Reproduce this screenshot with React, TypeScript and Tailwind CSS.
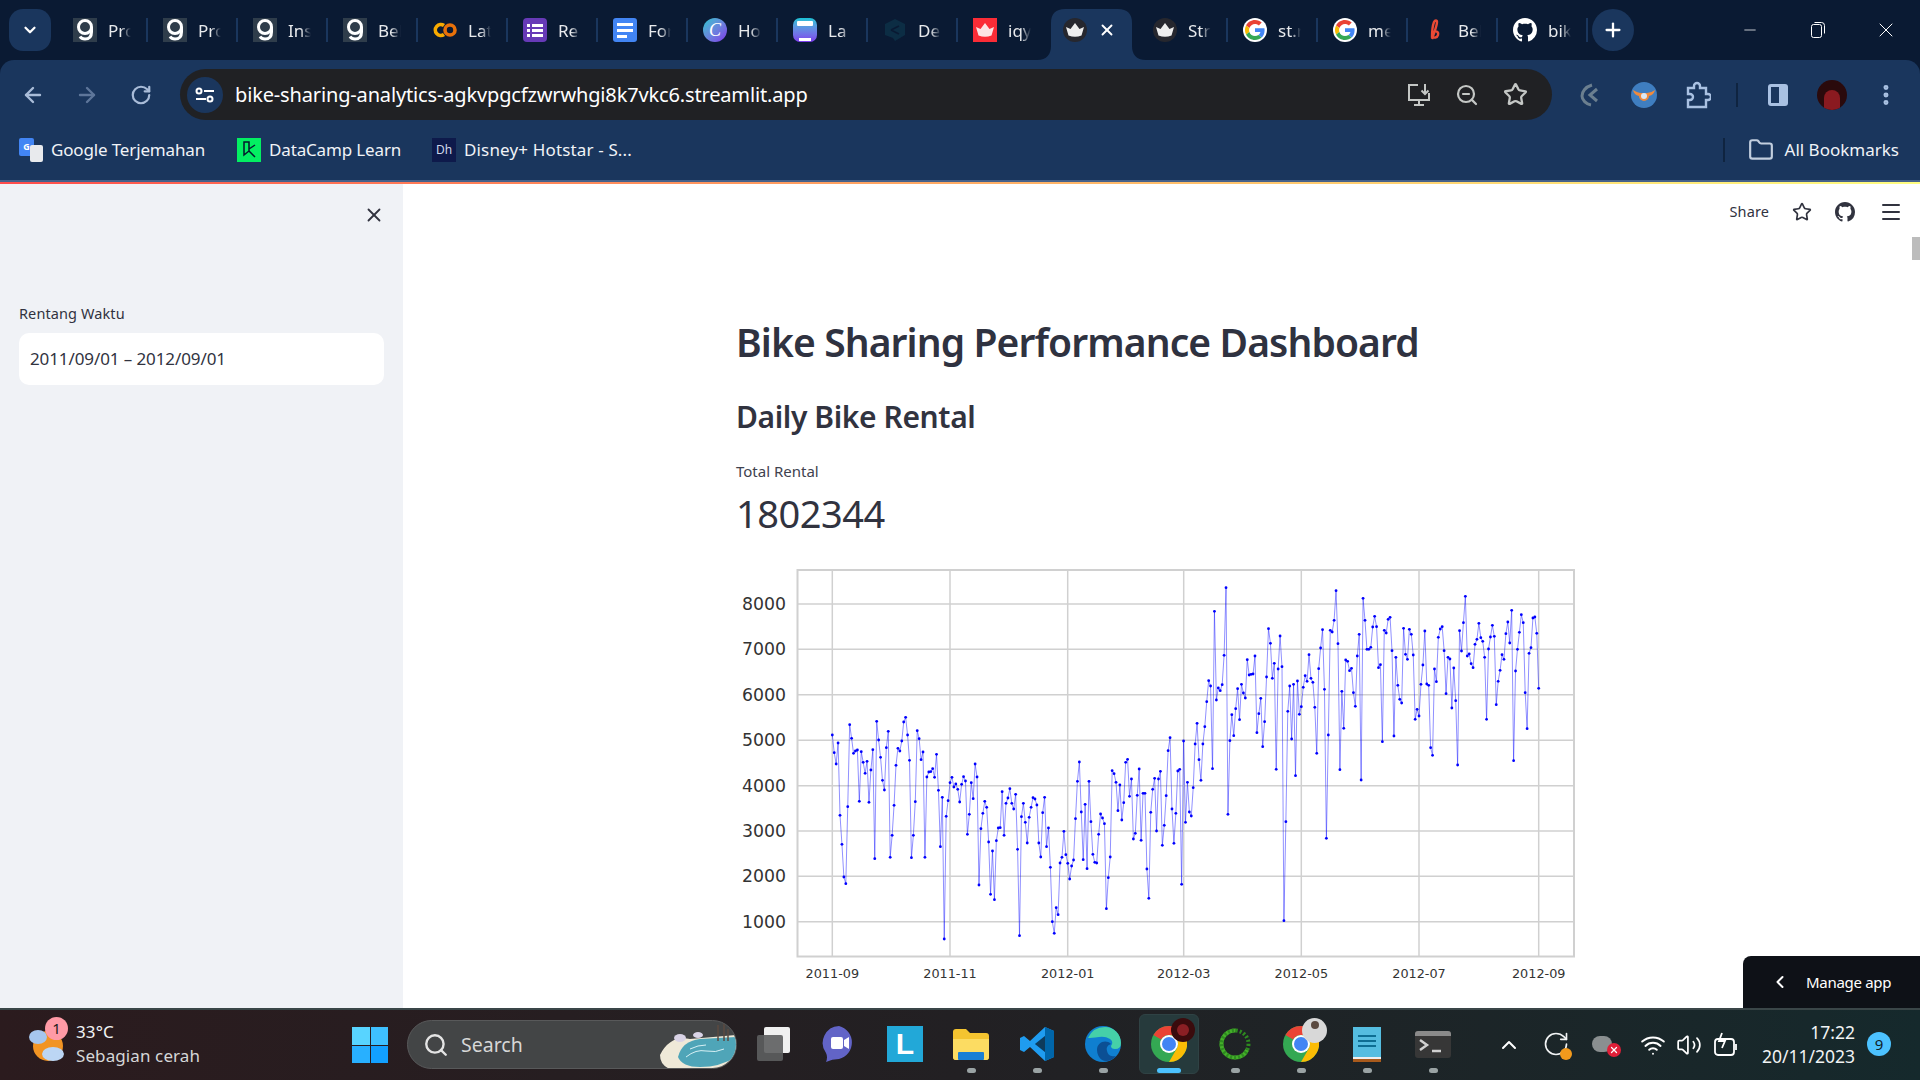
import { ArrowLeft, ArrowRight, ChevronDown, ChevronLeft, ChevronUp, Folder, Menu, Minus, MoreVertical, Plus, RotateCw, Search, Star, Volume2, Wifi, X, ZoomOut } from "lucide-react";
import type { ReactNode } from "react";

// y values read off the chart, one per day from 2011-09-01 to 2012-09-01
const rawY = [
  525,578,612,549,766,853,951,971,740,494,535,580,573,570,724,575,607,640,604,727,630,569,896,484,540,592,661,690,563,514,892,826,736,616,565,573,543,486,472,525,601,893,826,725,512,536,599,576,892,651,636,635,626,652,583,691,860,712,1137,769,722,668,652,681,672,688,726,673,650,663,823,763,668,716,612,651,975,806,760,724,742,846,1003,873,1019,842,804,803,695,826,730,714,686,730,747,703,868,1127,770,730,787,849,772,742,713,717,735,849,891,758,712,860,804,922,1085,1120,1043,1064,909,892,814,884,910,957,918,900,776,664,606,756,899,733,926,664,785,883,907,909,823,762,774,791,1046,953,891,632,641,667,752,675,780,728,607,598,709,657,837,820,706,627,841,700,700,927,1015,757,688,655,813,657,634,856,796,707,572,533,747,850,760,633,628,973,543,787,667,756,768,683,552,490,599,
  661,552,500,425,362,378,626,154,420,384,392,374,286,83,763,542,464,527,446,386,479,373,399,414,299,345,343,342,288,518,461,415,560,485,351,206,250,355,310,628,327,228,320,1082,785,454,378,537,373,647,363,463,440,382,347,364,284,355,367,442,580,326,264,209,388,835,525,211,216,181,92,251,629,394,505,300,304,332,325,398,439,288,223,660,115,181,268,268,262,201,169,200,323,314,545,211,219,178,172,272,528,292,376,418,429,205,283,298,208,223,285,478,448,468,373,315,213,372,376,563,586,327,365,232,207,200,272,401,292,297,444,324,422,615,212,273,188,109,288,282,311,323,253,238,190,233,244,292,478,267,231,196,229,434,364,331,284,298,221,186,249,151,602,333,268,217,164,188,398,506,280,263,174,171,220,385,
];

const points = rawY.map((v, i) => ({
  x: 832.3 + (i * 706.4) / (rawY.length - 1),
  y: 560 + v / 3,
}));

const yTicks = [
  { label: "8000", y: 604 },
  { label: "7000", y: 649.3 },
  { label: "6000", y: 694.7 },
  { label: "5000", y: 740.3 },
  { label: "4000", y: 785.7 },
  { label: "3000", y: 831 },
  { label: "2000", y: 876.3 },
  { label: "1000", y: 921.7 },
];

const xTicks = [
  { label: "2011-09", x: 832.3 },
  { label: "2011-11", x: 950 },
  { label: "2012-01", x: 1067.7 },
  { label: "2012-03", x: 1183.7 },
  { label: "2012-05", x: 1301.3 },
  { label: "2012-07", x: 1419 },
  { label: "2012-09", x: 1538.7 },
];

const Nine = () => (
  <div className="w-6 h-6 bg-[#2f3d4b] flex items-center justify-center">
    <svg width="20" height="24" viewBox="0 0 20 24" fill="none" stroke="#fff" strokeWidth="3">
      <circle cx="10" cy="9" r="6.5" />
      <path d="M16.5 9v5c0 5-3 7-6.5 7-2 0-4-.8-5-2.5" />
    </svg>
  </div>
);

const Colab = () => (
  <svg width="24" height="24" viewBox="0 0 24 24" fill="none" strokeWidth="3.6">
    <path d="M11 7.5a5.5 5.5 0 1 0 0 9" stroke="#f9ab00" />
    <circle cx="17" cy="12" r="5" stroke="#e8710a" />
  </svg>
);

const Forms = () => (
  <div className="w-6 h-6 bg-[#673ab7] rounded-sm flex flex-col justify-center gap-[2px] px-1">
    {[0, 1, 2].map((i) => (
      <div key={i} className="flex gap-[2px]">
        <div className="w-[3px] h-[3px] bg-white" />
        <div className="flex-1 h-[3px] bg-white" />
      </div>
    ))}
  </div>
);

const Docs = () => (
  <div className="w-6 h-6 bg-[#4285f4] rounded-[3px] flex flex-col justify-center gap-[3px] px-1">
    <div className="h-[3px] bg-white" />
    <div className="h-[3px] bg-white" />
    <div className="h-[3px] w-[10px] bg-white" />
  </div>
);

const Canva = () => (
  <div className="w-6 h-6 rounded-full bg-gradient-to-br from-[#00c4cc] to-[#7d2ae8] flex items-center justify-center text-white italic text-[18px] leading-none font-['Liberation_Serif',serif]">
    C
  </div>
);

const Layer = () => (
  <div className="w-6 h-6 rounded-[7px] bg-gradient-to-b from-[#12c2d6] to-[#7c3aed] flex flex-col items-center justify-between py-[1px]">
    <div className="w-4 h-[5px] bg-white rounded-[1px] mt-[2px]" />
    <div className="w-3 h-[3px] bg-white" />
  </div>
);

const DeepLearning = () => (
  <svg width="24" height="24" viewBox="0 0 24 24">
    <path d="M12 1l10 5v11l-10 6-2-3-8-3V6z" fill="#0c2d44" />
    <path d="M8 12l8-4M8 12l8 4" stroke="#0a1a33" strokeWidth="1.6" />
  </svg>
);

const Crown = ({ color = "#fff" }: { color?: string }) => (
  <svg width="18" height="14" viewBox="0 0 18 14">
    <path d="M0 4l4.5 2L9 0l4.5 6L18 4l-2.5 8.5Q9 15 2.5 12.5z" fill={color} />
  </svg>
);

const Streamlit = () => (
  <div className="w-6 h-6 rounded-full bg-[#26272e] flex items-center justify-center">
    <Crown color="#eee" />
  </div>
);

const Red = () => (
  <div className="w-6 h-6 bg-[#fb2c36] flex items-center justify-center">
    <Crown color="#fde4e4" />
  </div>
);

const GoogleG = () => (
  <div className="w-6 h-6 rounded-full bg-white flex items-center justify-center">
    <svg width="20" height="20" viewBox="0 0 48 48">
      <path fill="#EA4335" d="M24 9.5c3.5 0 6.7 1.2 9.200 3.600l6.900-6.900C35.900 2.400 30.500 0 24 0 14.600 0 6.500 5.400 2.600 13.200l8 6.200C12.500 13.700 17.800 9.500 24 9.500z" />
      <path fill="#4285F4" d="M46.980 24.550c0-1.570-.15-3.090-.38-4.550H24v9.020h12.940c-.58 2.960-2.260 5.480-4.780 7.180l7.730 6c4.510-4.180 7.090-10.360 7.090-17.650z" />
      <path fill="#FBBC05" d="M10.530 28.590a14.500 14.500 0 0 1 0-9.180l-7.980-6.190a24 24 0 0 0 0 21.560z" />
      <path fill="#34A853" d="M24 48c6.480 0 11.930-2.130 15.890-5.810l-7.730-6c-2.150 1.450-4.920 2.300-8.160 2.300-6.260 0-11.570-4.220-13.470-9.910l-7.980 6.190C6.510 42.620 14.620 48 24 48z" />
    </svg>
  </div>
);

const Behance = () => (
  <svg width="24" height="24" viewBox="0 0 24 24" fill="none" stroke="#ea4a35" strokeWidth="2.4">
    <path d="M9 21c2-6 5-13 5-17 0-2-2-2-3 0-1.500 4-2 10-2 15 2 1 5 1 6-2 .8-3-2-4.500-4-3" />
  </svg>
);

const GithubMark = ({ size = 24, color = "#fff" }: { size?: number; color?: string }) => (
  <svg width={size} height={size} viewBox="0 0 16 16" fill={color}>
    <path d="M8 0C3.580 0 0 3.580 0 8c0 3.540 2.290 6.530 5.470 7.590.4.070.55-.17.55-.38 0-.19-.01-.82-.01-1.490-2.010.37-2.530-.49-2.690-.94-.09-.23-.48-.94-.82-1.130-.28-.15-.68-.52-.01-.53.63-.01 1.080.58 1.230.82.720 1.210 1.870.870 2.330.660.070-.520.280-.870.510-1.070-1.780-.2-3.640-.89-3.640-3.950 0-.870.310-1.590.820-2.150-.080-.2-.360-1.020.080-2.120 0 0 .670-.210 2.200.820.640-.180 1.320-.270 2-.270s1.360.090 2 .270c1.530-1.040 2.200-.820 2.200-.820.440 1.100.160 1.920.080 2.120.510.560.820 1.270.820 2.150 0 3.070-1.870 3.750-3.650 3.950.290.250.540.730.540 1.480 0 1.070-.010 1.930-.010 2.200 0 .210.150.460.550.380A8.010 8.010 0 0 0 16 8c0-4.420-3.580-8-8-8z" />
  </svg>
);

const tabs: { icon: ReactNode; label: string }[] = [
  { icon: <Nine />, label: "Pro" },
  { icon: <Nine />, label: "Pro" },
  { icon: <Nine />, label: "Ins" },
  { icon: <Nine />, label: "Bel" },
  { icon: <Colab />, label: "Lat" },
  { icon: <Forms />, label: "Re" },
  { icon: <Docs />, label: "For" },
  { icon: <Canva />, label: "Ho" },
  { icon: <Layer />, label: "La" },
  { icon: <DeepLearning />, label: "De" },
  { icon: <Red />, label: "iqy" },
];

const tabsAfter: { icon: ReactNode; label: string }[] = [
  { icon: <Streamlit />, label: "Str" },
  { icon: <GoogleG />, label: "st.r" },
  { icon: <GoogleG />, label: "me" },
  { icon: <Behance />, label: "Bel" },
  { icon: <GithubMark />, label: "bik" },
];

const Tab = ({ icon, label, divider }: { icon: ReactNode; label: string; divider: boolean }) => (
  <div className="w-[90px] h-6 flex items-center pl-[17px] relative">
    {icon}
    <div className="ml-[11px] mt-[2px] w-[23px] overflow-hidden whitespace-nowrap text-[17px] text-[#e8eaed] [mask-image:linear-gradient(to_right,black_55%,transparent)]">
      {label}
    </div>
    {divider && <div className="absolute right-[-2px] top-0 w-[2px] h-6 bg-[#1a365d]" />}
  </div>
);

const ChromeIcon = () => (
  <svg width="36" height="36" viewBox="0 0 36 36">
    <circle cx="18" cy="18" r="18" fill="#34a853" />
    <path d="M18 0A18 18 0 0 1 33.600 9H18a9 9 0 0 0-7.800 4.500L2.400 9A18 18 0 0 1 18 0z" fill="#ea4335" />
    <path d="M33.600 9A18 18 0 0 1 18 36l7.800-13.500A9 9 0 0 0 18 9z" fill="#fbbc05" />
    <circle cx="18" cy="18" r="9" fill="#fff" />
    <circle cx="18" cy="18" r="7" fill="#4285f4" />
  </svg>
);

const TaskSlot = ({ children, dot, active }: { children?: ReactNode; dot?: boolean; active?: boolean }) => (
  <div className="w-[66px] h-[60px] mt-[4px] flex flex-col items-center relative">
    {active && <div className="absolute inset-x-[3px] top-0 h-[60px] rounded-md bg-[#263a3c] border border-[#2f4244]" />}
    <div className="h-[60px] flex items-center justify-center relative">{children}</div>
    {dot && <div className="absolute top-[54px] w-[9px] h-[5px] rounded-full bg-[#9aa3a4]" />}
    {active && <div className="absolute top-[54px] w-6 h-[5px] rounded-full bg-[#4cc2ff]" />}
  </div>
);

export default function App() {
  return (
    <div className="w-[1920px] h-[1080px] overflow-hidden flex flex-col font-['Noto_Sans',sans-serif]">
      {/* tab strip */}
      <div className="h-[60px] bg-[#0a1a33] flex items-center pl-[9px] relative shrink-0">
        <div className="w-[42px] h-[42px] rounded-[14px] bg-[#1a365d] flex items-center justify-center">
          <ChevronDown size={18} color="#fff" strokeWidth={3} />
        </div>
        <div className="ml-[5px] flex items-center">
          {tabs.map((t, i) => (
            <Tab key={i} icon={t.icon} label={t.label} divider={i < tabs.length - 1} />
          ))}
          <div className="w-[90px] h-[51px] mt-[9px] flex items-start pt-[9px] pl-[17px] relative">
            <svg className="absolute left-[-9px] top-0" width="109" height="51" viewBox="0 0 109 51">
              <path d="M0 51C10 51 14 45 14 37V14Q14 0 28 0H81Q95 0 95 14V37C95 45 99 51 109 51z" fill="#1a365d" />
            </svg>
            <div className="relative">
              <Streamlit />
            </div>
            <X className="relative ml-[11px] mt-[3px]" size={18} color="#fff" strokeWidth={2.5} />
          </div>
          {tabsAfter.map((t, i) => (
            <Tab key={i} icon={t.icon} label={t.label} divider />
          ))}
          <div className="ml-[6px] w-[42px] h-[42px] rounded-full bg-[#1a365d] flex items-center justify-center">
            <Plus size={22} color="#fff" strokeWidth={2.5} />
          </div>
        </div>
        <div className="ml-auto flex items-center text-white">
          <div className="w-[68px] flex justify-center"><Minus size={18} strokeWidth={1} /></div>
          <div className="w-[68px] flex justify-center">
            <svg width="16" height="18" viewBox="0 0 16 18" fill="none" stroke="#fff" strokeWidth="1">
              <rect x="1.500" y="3.500" width="10" height="13" rx="2" />
              <path d="M4.500 1.500h7a3 3 0 0 1 3 3v8" />
            </svg>
          </div>
          <div className="w-[68px] flex justify-center"><X size={24} strokeWidth={1} /></div>
        </div>
      </div>

      {/* toolbar + bookmarks */}
      <div className="bg-[#0a1a33] shrink-0">
        <div className="bg-[#1a365d] rounded-tl-[14px] rounded-tr-[14px]">
          <div className="h-[60px] pt-[9px]">
            <div className="h-[51px] flex items-center pl-[6px]">
              <div className="w-[54px] flex justify-center"><ArrowLeft size={24} color="#a9bcd8" strokeWidth={2.4} /></div>
              <div className="w-[54px] flex justify-center"><ArrowRight size={24} color="#5e769a" strokeWidth={2.4} /></div>
              <div className="w-[54px] flex justify-center"><RotateCw size={22} color="#a9bcd8" strokeWidth={2.4} /></div>
              <div className="ml-[12px] w-[1372px] h-[51px] rounded-full bg-[#202124] flex items-center">
                <div className="ml-[7px] w-9 h-9 rounded-full bg-[#1a365d] flex items-center justify-center">
                  <svg width="20" height="16" viewBox="0 0 20 16" fill="none" stroke="#fff" strokeWidth="2">
                    <circle cx="4" cy="4" r="2.500" />
                    <path d="M9 4h10M1 12h10" />
                    <circle cx="15" cy="12" r="2.500" />
                  </svg>
                </div>
                <div className="ml-[12px] flex-1 text-[20px] text-white whitespace-nowrap tracking-[-0.15px]">
                  bike-sharing-analytics-agkvpgcfzwrwhgi8k7vkc6.streamlit.app
                </div>
                <div className="w-12 flex justify-center">
                  <svg width="26" height="26" viewBox="0 0 26 26" fill="none" stroke="#c4c7c5" strokeWidth="2">
                    <path d="M12 3H3v15h20v-7M8 23h10M13 18v5" />
                    <path d="M19 2v10M15.500 8.500L19 12l3.500-3.500" />
                  </svg>
                </div>
                <div className="w-12 flex justify-center"><ZoomOut size={24} color="#c4c7c5" strokeWidth={2.2} /></div>
                <div className="w-12 flex justify-center"><Star size={25} color="#c4c7c5" strokeWidth={2.2} /></div>
                <div className="w-[13px]" />
              </div>
              <div className="ml-[11px] w-[54px] flex justify-center">
                <svg width="24" height="26" viewBox="0 0 24 26" fill="none" stroke="#6b7f8f" strokeWidth="3">
                  <path d="M14 3C7 5 4 10 4 14c0 4 4 8 9 9M19 7l-7 6 7 6" />
                </svg>
              </div>
              <div className="w-[54px] flex justify-center">
                <svg width="26" height="26" viewBox="0 0 26 26">
                  <circle cx="13" cy="13" r="13" fill="#3f7ec0" />
                  <path d="M2 8q5 3 8 3h6q4 0 8-3-1 5-6 6v0a5 5 0 1 1-10 0Q3 13 2 8z" fill="#f08a3c" />
                  <circle cx="13" cy="14" r="3" fill="#dce8f4" />
                </svg>
              </div>
              <div className="w-[54px] flex justify-center">
                <svg width="26" height="28" viewBox="0 0 26 28" fill="none" stroke="#a9c1e2" strokeWidth="2.400">
                  <path d="M3 7h6V5a3 3 0 0 1 6 0v2h6v6h2a2 2 0 0 1 0 6h-2v7H3v-7h2a3 3 0 0 0 0-6H3z" />
                </svg>
              </div>
              <div className="ml-[11px] w-[2px] h-6 bg-[#0f2440]" />
              <div className="ml-[13px] w-[54px] flex justify-center">
                <svg width="22" height="24" viewBox="0 0 22 24">
                  <rect x="1" y="1" width="20" height="22" rx="3" fill="#a9c1e2" />
                  <rect x="4" y="4" width="8" height="16" fill="#1a365d" />
                </svg>
              </div>
              <div className="w-[54px] flex justify-center">
                <div className="w-[30px] h-[30px] rounded-full bg-[#2a0a0c] overflow-hidden flex items-end justify-center">
                  <div className="w-4 h-5 bg-[#8a1a20] rounded-t-lg" />
                </div>
              </div>
              <div className="w-[54px] flex justify-center"><MoreVertical size={26} color="#a9c1e2" strokeWidth={2.6} /></div>
            </div>
          </div>
          <div className="h-[60px] flex items-center text-[17px] text-[#f0f3f7] whitespace-nowrap">
            <div className="ml-[19px] w-6 h-6 relative">
              <div className="absolute left-0 top-0 w-[15px] h-[18px] bg-[#4285f4] rounded-[2px] flex items-center justify-center text-[9px] font-bold text-white">G</div>
              <div className="absolute right-0 bottom-0 w-[13px] h-[17px] bg-[#e8eaed] rounded-[2px]" />
            </div>
            <span className="ml-[8px] mt-[-1px] w-[155px] tracking-[-0.15px]">Google Terjemahan</span>
            <div className="ml-[31px] w-6 h-6 bg-[#03ef62] flex items-center justify-center">
              <svg width="14" height="18" viewBox="0 0 14 18" fill="none" stroke="#05192d" strokeWidth="1.500">
                <path d="M2 1v13l5-4V1zM7 8l6-4M7 10l6 6" />
              </svg>
            </div>
            <span className="ml-[8px] mt-[-1px] w-[136px] tracking-[-0.15px]">DataCamp Learn</span>
            <div className="ml-[27px] w-6 h-6 bg-[#0e1a4b] flex items-center justify-center text-[12px] text-[#cfd8ea]">Dh</div>
            <span className="ml-[8px] mt-[-1px] tracking-[0.15px]">Disney+ Hotstar - S...</span>
            <div className="ml-auto w-[2px] h-6 bg-[#0f2440]" />
            <Folder className="ml-[23px]" size={26} color="#c2cede" strokeWidth={2} />
            <span className="ml-[11px] mr-[21px] mt-[-1px]">All Bookmarks</span>
          </div>
        </div>
      </div>

      {/* streamlit decoration */}
      <div className="h-[4px] shrink-0 bg-[#1a365d] flex flex-col">
        <div className="h-[2px] bg-[#45618a]" />
        <div className="h-[2px] bg-gradient-to-r from-[#ff4b4b] to-[#fffd80]" />
      </div>

      {/* page */}
      <div className="h-[824px] flex relative shrink-0 overflow-hidden bg-white text-[#31333f] font-['Noto_Sans',sans-serif]">
        <div className="w-[403px] bg-[#f0f2f6] shrink-0 flex flex-col">
          <div className="flex justify-end pt-[20px] pr-[18px]">
            <X size={22} color="#31333f" strokeWidth={2} />
          </div>
          <div className="mt-[77px] ml-[19px] text-[14.500px] leading-[20px] tracking-[0.1px]">Rentang Waktu</div>
          <div className="mt-[10px] ml-[19px] w-[365px] h-[52px] bg-white rounded-[10px] flex items-center pl-[11px] text-[17px] tracking-[-0.1px]">
            2011/09/01 – 2012/09/01
          </div>
        </div>

        <div className="flex-1 flex flex-col relative">
          <div className="h-[46px] flex items-center justify-end pr-[17px] mt-[5px] shrink-0">
            <span className="text-[14.500px] text-[#31333f] tracking-[0.1px]">Share</span>
            <Star className="ml-[23px]" size={20} color="#31333f" strokeWidth={2} />
            <div className="ml-[23px]"><GithubMark size={20} color="#31333f" /></div>
            <Menu className="ml-[24px]" size={24} color="#31333f" strokeWidth={2} />
          </div>
          <div className="pl-[333px] flex flex-col">
            <h1 className="mt-[81px] text-[39px] leading-[52px] font-semibold text-[#2f3240] tracking-[-0.9px] whitespace-nowrap">
              Bike Sharing Performance Dashboard
            </h1>
            <h2 className="mt-[29px] text-[30px] leading-[40px] font-semibold text-[#31333f] tracking-[-0.4px] whitespace-nowrap">
              Daily Bike Rental
            </h2>
            <div className="mt-[24px] text-[15px] leading-[20px] text-[#40424f]">Total Rental</div>
            <div className="mt-[6px] text-[38px] leading-[52px] text-[#31333f] tracking-[-0.5px]">1802344</div>
            <svg className="mt-[26px] block" width="860" height="420" viewBox="736 565 860 420">
              <g stroke="#d0d0d0" strokeWidth="1.500">
                {yTicks.map((t) => (
                  <line key={t.label} x1="797" x2="1574" y1={t.y} y2={t.y} />
                ))}
                {xTicks.map((t) => (
                  <line key={t.label} x1={t.x} x2={t.x} y1="570" y2="957" />
                ))}
              </g>
              <rect x="797.500" y="570" width="776.500" height="386.500" fill="none" stroke="#d0d0d0" strokeWidth="2" />
              <polyline
                points={points.map((p) => `${p.x},${p.y}`).join(" ")}
                fill="none"
                stroke="#0000ff"
                strokeOpacity="0.55"
                strokeWidth="0.8"
              />
              {points.map((p, i) => (
                <circle key={i} cx={p.x} cy={p.y} r="1.400" fill="#0000ff" />
              ))}
              <g fontFamily="'DejaVu Sans',sans-serif" fill="#333333">
                {yTicks.map((t) => (
                  <text key={t.label} x="786" y={t.y + 6} fontSize="17.300" textAnchor="end">
                    {t.label}
                  </text>
                ))}
                {xTicks.map((t) => (
                  <text key={t.label} x={t.x} y="978" fontSize="12.800" textAnchor="middle">
                    {t.label}
                  </text>
                ))}
              </g>
            </svg>
          </div>
          <div className="absolute right-0 top-[53px] w-2 h-[23px] bg-[#bcbcbc]" />
        </div>

        <div className="absolute right-0 bottom-0 w-[177px] h-[52px] bg-[#0e1117] rounded-tl-[8px] flex items-center pl-[27px] text-white text-[15px] tracking-[-0.3px]">
          <ChevronLeft size={20} strokeWidth={2.4} />
          <span className="ml-[16px]">Manage app</span>
        </div>
      </div>

      {/* taskbar */}
      <div className="h-[72px] shrink-0 border-t-[2px] border-[#3a4648] bg-gradient-to-r from-[#2b1b1e] via-[#222023] to-[#15292c] flex items-start text-[#f1f3f4] whitespace-nowrap">
        <div className="ml-[28px] w-[40px] h-[70px] relative">
          <svg className="absolute left-0 top-[12px]" width="38" height="44" viewBox="0 0 38 44">
            <circle cx="20" cy="24" r="15" fill="#f29423" />
            <ellipse cx="10" cy="15" rx="9" ry="7" fill="#a6c6ee" />
            <ellipse cx="25" cy="32" rx="11" ry="7" fill="#bcd6f4" />
          </svg>
          <div className="absolute left-[17px] top-[7px] w-[23px] h-[23px] rounded-full bg-[#ff9aa6] text-[#1c1c1c] text-[15px] leading-[23px] text-center">1</div>
        </div>
        <div className="ml-[8px] mt-[10px] w-[140px] flex flex-col text-[17px] leading-[24px] tracking-[0.1px]">
          <span>33°C</span>
          <span className="text-[#d5d6d7]">Sebagian cerah</span>
        </div>
        <div className="ml-[136px] mt-[17px] w-[36px] h-[36px] grid grid-cols-2 gap-[1px]">
          <div className="bg-[#58d4ff]" />
          <div className="bg-[#3ec0ff]" />
          <div className="bg-[#28b0ff]" />
          <div className="bg-[#12a0ff]" />
        </div>
        <div className="ml-[19px] mt-[10px] w-[330px] h-[49px] rounded-full bg-[#434546] border border-[#58595a] flex items-center pl-[15px] relative overflow-hidden">
          <Search size={26} color="#e4e4e4" strokeWidth={2.2} />
          <span className="ml-[12px] text-[19.500px] text-[#d6d7d7]">Search</span>
          <svg className="absolute right-0 top-0" width="78" height="48" viewBox="0 0 78 48">
            <path d="M2 34Q12 14 32 18L78 14V48H12Q2 44 2 34z" fill="#efe9d8" />
            <path d="M20 36Q24 20 42 18L78 16V36Q62 46 42 46 24 46 20 36z" fill="#4fa5b8" />
            <path d="M28 36q10-8 20-6t18-2M32 28q8-4 16-4" stroke="#d7f0f4" fill="none" />
            <path d="M60 20V4M66 20V2M70 20V8" stroke="#5b4a40" strokeWidth="1.500" />
            <ellipse cx="22" cy="17" rx="6" ry="4" fill="#d9d3e6" />
            <ellipse cx="40" cy="14" rx="5" ry="3" fill="#d9d3e6" />
          </svg>
        </div>
        <div className="ml-[3px] flex">
          <TaskSlot>
            <svg width="36" height="36" viewBox="0 0 36 36">
              <rect x="9" y="1" width="26" height="26" rx="2" fill="#f0f0f0" />
              <rect x="2" y="9" width="26" height="26" rx="2" fill="#5d5e5f" fillOpacity="0.9" />
            </svg>
          </TaskSlot>
          <TaskSlot>
            <svg width="34" height="38" viewBox="0 0 34 38">
              <path d="M17 1a17 17 0 0 1 0 33q-7 0-13 3 2-5 0-9A17 17 0 0 1 17 1z" fill="#6264c7" />
              <rect x="9" y="12" width="12" height="12" rx="2" fill="#fff" />
              <path d="M22 15l5-3v12l-5-3z" fill="#fff" />
            </svg>
          </TaskSlot>
          <TaskSlot>
            <div className="w-9 h-9 bg-[#22a8d8] flex items-center justify-center font-bold text-white text-[30px] leading-none font-['Liberation_Sans',sans-serif]">L</div>
          </TaskSlot>
          <TaskSlot dot>
            <svg width="38" height="34" viewBox="0 0 38 34">
              <path d="M1 5a3 3 0 0 1 3-3h10l4 4h16a3 3 0 0 1 3 3v21a3 3 0 0 1-3 3H4a3 3 0 0 1-3-3z" fill="#f4c430" />
              <path d="M1 12h36v18a3 3 0 0 1-3 3H4a3 3 0 0 1-3-3z" fill="#fcdc62" />
              <rect x="6" y="25" width="26" height="8" rx="1" fill="#1a7fd4" />
            </svg>
          </TaskSlot>
          <TaskSlot dot>
            <svg width="36" height="36" viewBox="0 0 36 36">
              <path d="M26 1l9 4v26l-9 4L11 21l-6 5-4-2V12l4-2 6 5z" fill="#1f9cf0" />
              <path d="M26 1l9 4v26l-9 4zM26 10l-10 8 10 8z" fill="#0065a9" />
              <path d="M26 10v16l-10-8z" fill="#17202a" fillOpacity="0.6" />
            </svg>
          </TaskSlot>
          <TaskSlot dot>
            <svg width="36" height="36" viewBox="0 0 36 36">
              <circle cx="18" cy="18" r="18" fill="#0f7fd0" />
              <path d="M3 12Q8 1 20 1c9 0 16 7 16 16q0 6-6 6-4 0-4-3 3-4-1-7-5-3-11-2-8 1-11 1z" fill="#45d0a8" />
              <path d="M12 24c0-8 9-11 14-6-3 1-5 3-4 7 1 5 6 6 9 5-4 5-10 6-14 4-3-2-5-6-5-10z" fill="#0b4f94" />
            </svg>
          </TaskSlot>
          <TaskSlot active>
            <div className="relative">
              <ChromeIcon />
              <div className="absolute left-[20px] -top-[8px] w-6 h-6 rounded-full bg-[#3a0b0d] flex items-center justify-center">
                <div className="w-3 h-3 rounded-full bg-[#8a1f24]" />
              </div>
            </div>
          </TaskSlot>
          <TaskSlot dot>
            <svg width="32" height="32" viewBox="0 0 32 32" fill="none" stroke="#45b02a" strokeWidth="4">
              <circle cx="16" cy="16" r="13.500" strokeDasharray="58 27" strokeDashoffset="-6" />
              <circle cx="16" cy="16" r="13.500" stroke="#2e8a20" strokeDasharray="2 2" />
            </svg>
          </TaskSlot>
          <TaskSlot dot>
            <div className="relative">
              <ChromeIcon />
              <div className="absolute left-[19px] -top-[8px] w-[25px] h-[25px] rounded-full bg-[#d8d8d8] flex items-start justify-center">
                <div className="w-2 h-2 mt-[3px] rounded-full bg-[#5b4a40]" />
              </div>
            </div>
          </TaskSlot>
          <TaskSlot dot>
            <svg width="28" height="36" viewBox="0 0 28 36">
              <rect y="1" width="28" height="30" fill="#55bde0" />
              <rect y="31" width="28" height="3" fill="#eee" />
              <rect y="33" width="28" height="3" fill="#a85a1c" />
              <path d="M5 10h18M5 15h18M5 20h18" stroke="#0e6e93" strokeWidth="2" />
            </svg>
          </TaskSlot>
          <TaskSlot dot>
            <div className="w-9 h-[27px] rounded-[3px] bg-[#373737] overflow-hidden">
              <div className="h-[5px] bg-[#8a8a8a]" />
              <svg width="36" height="22" viewBox="0 0 36 22" fill="none" stroke="#d0d0d0" strokeWidth="2.500">
                <path d="M5 4l7 5-7 5M17 15h9" />
              </svg>
            </div>
          </TaskSlot>
        </div>
        <div className="ml-[31px] flex items-center h-[70px]">
          <div className="w-6 flex justify-center"><ChevronUp size={24} color="#fff" strokeWidth={2} /></div>
          <div className="ml-[21px] relative w-[30px] h-[30px]">
            <RotateCw size={28} color="#f1f3f4" strokeWidth={1.4} />
            <div className="absolute right-0 bottom-0 w-3 h-3 rounded-full bg-[#f39a1c]" />
          </div>
          <div className="ml-[19px] relative w-[30px] h-[24px]">
            <div className="absolute left-[1px] top-[3px] w-5 h-4 rounded-full bg-[#8a8f90]" />
            <div className="absolute right-0 bottom-0 w-[14px] h-[14px] rounded-full bg-[#e01f38] flex items-center justify-center">
              <X size={10} color="#fff" strokeWidth={3} />
            </div>
          </div>
          <Wifi className="ml-[19px]" size={26} color="#fff" strokeWidth={1.8} />
          <Volume2 className="ml-[10px]" size={26} color="#fff" strokeWidth={1.6} />
          <svg className="ml-[12px]" width="24" height="26" viewBox="0 0 24 26" fill="none" stroke="#fff" strokeWidth="1.800">
            <rect x="1" y="7" width="19" height="16" rx="3" />
            <path d="M22 12v6M8 1L5 9h6l-3 7" />
          </svg>
        </div>
        <div className="ml-[11px] w-[106px] mt-[10px] flex flex-col items-end text-[17.500px] leading-[24px]">
          <span>17:22</span>
          <span>20/11/2023</span>
        </div>
        <div className="ml-[12px] mt-[22px] w-6 h-6 rounded-full bg-[#4cc2ff] text-[#10222a] text-[15px] leading-6 text-center">9</div>
      </div>
    </div>
  );
}
